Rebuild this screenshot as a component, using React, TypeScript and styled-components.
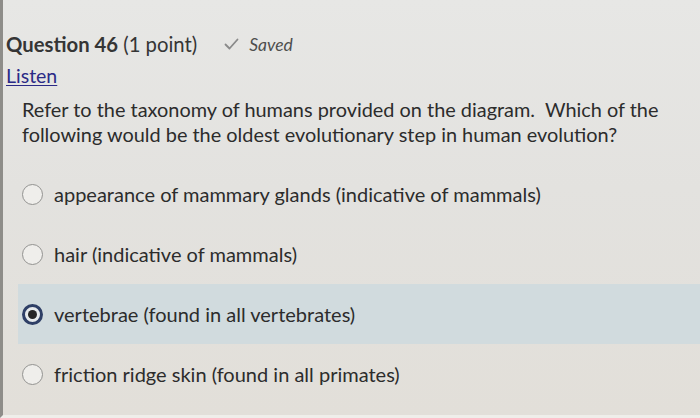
import React from 'react'
import styled, { createGlobalStyle } from 'styled-components'

const GlobalStyle = createGlobalStyle`
  html, body {
    margin: 0;
    padding: 0;
    background: #e3e2de;
  }
  body {
    font-family: Lato, "Open Sans", "Liberation Sans", sans-serif;
  }
`

const Page = styled.div`
  height: 418px;
  box-sizing: border-box;
  border-left: 3px solid #8e8d89;
  border-bottom: 3px solid #efeeea;
  background: linear-gradient(180deg, #e7e7e5 0%, #e3e2df 45%, #e2dfd9 100%);
  overflow: hidden;
  padding-top: 32px;
`

const Header = styled.div`
  display: flex;
  align-items: center;
  padding-left: 3px;
  height: 24px;
`

const Title = styled.h2`
  margin: 0;
  font-size: 20.3px;
  font-weight: 400;
  color: #353535;
  line-height: 24px;

  b {
    font-weight: 700;
  }
`

const SavedTag = styled.span`
  display: flex;
  align-items: center;
  gap: 10px;
  margin-left: 27px;
  font-size: 17.5px;
  font-style: italic;
  color: #4e4e4e;
`

const ListenLink = styled.a`
  display: inline-block;
  margin: 9px 0 0 3px;
  font-size: 19.5px;
  line-height: 22px;
  color: #2b2a86;
  text-decoration: underline;
  text-underline-offset: 2px;
`

const QuestionText = styled.p`
  margin: 10px 0 0 19px;
  width: 670px;
  font-size: 19.9px;
  line-height: 25px;
  color: #2c2c2c;
`

const Options = styled.div`
  display: flex;
  flex-direction: column;
  margin-top: 17px;
  padding-left: 15px;
`

const Option = styled.label<{ selected?: boolean }>`
  display: flex;
  align-items: center;
  height: 60px;
  padding-left: 4px;
  background: ${({ selected }) => (selected ? '#d1dbde' : 'transparent')};
  font-size: 20px;
  color: #2c2c2c;
`

const Radio = styled.span<{ checked?: boolean }>`
  box-sizing: border-box;
  width: 21px;
  height: 21px;
  border-radius: 50%;
  margin-right: 11px;
  display: flex;
  align-items: center;
  justify-content: center;
  flex-shrink: 0;
  border: ${({ checked }) => (checked ? '3px solid #2e3f66' : '1.5px solid #939391')};
  background: ${({ checked }) => (checked ? '#e6eaec' : '#efeeeb')};

  &::after {
    content: '';
    display: ${({ checked }) => (checked ? 'block' : 'none')};
    width: 9px;
    height: 9px;
    border-radius: 50%;
    background: #262626;
  }
`

const CheckIcon = () => (
  <svg width="15" height="12" viewBox="0 0 15 12" fill="none">
    <path d="M1.5 6.5 L5.5 10.5 L13.5 1.5" stroke="#8a8a8a" strokeWidth="1.8" strokeLinecap="round" strokeLinejoin="round" />
  </svg>
)

const answers = [
  'appearance of mammary glands (indicative of mammals)',
  'hair (indicative of mammals)',
  'vertebrae (found in all vertebrates)',
  'friction ridge skin (found in all primates)',
]

export default function App() {
  return (
    <>
      <GlobalStyle />
      <Page>
        <Header>
          <Title>
            <b>Question 46</b> (1 point)
          </Title>
          <SavedTag>
            <CheckIcon />
            Saved
          </SavedTag>
        </Header>
        <ListenLink href="#">Listen</ListenLink>
        <QuestionText>
          Refer to the taxonomy of humans provided on the diagram.&nbsp; Which of the following would be the
          oldest evolutionary step in human evolution?
        </QuestionText>
        <Options>
          {answers.map((a, i) => (
            <Option key={a} selected={i === 2}>
              <Radio checked={i === 2} />
              {a}
            </Option>
          ))}
        </Options>
      </Page>
    </>
  )
}
